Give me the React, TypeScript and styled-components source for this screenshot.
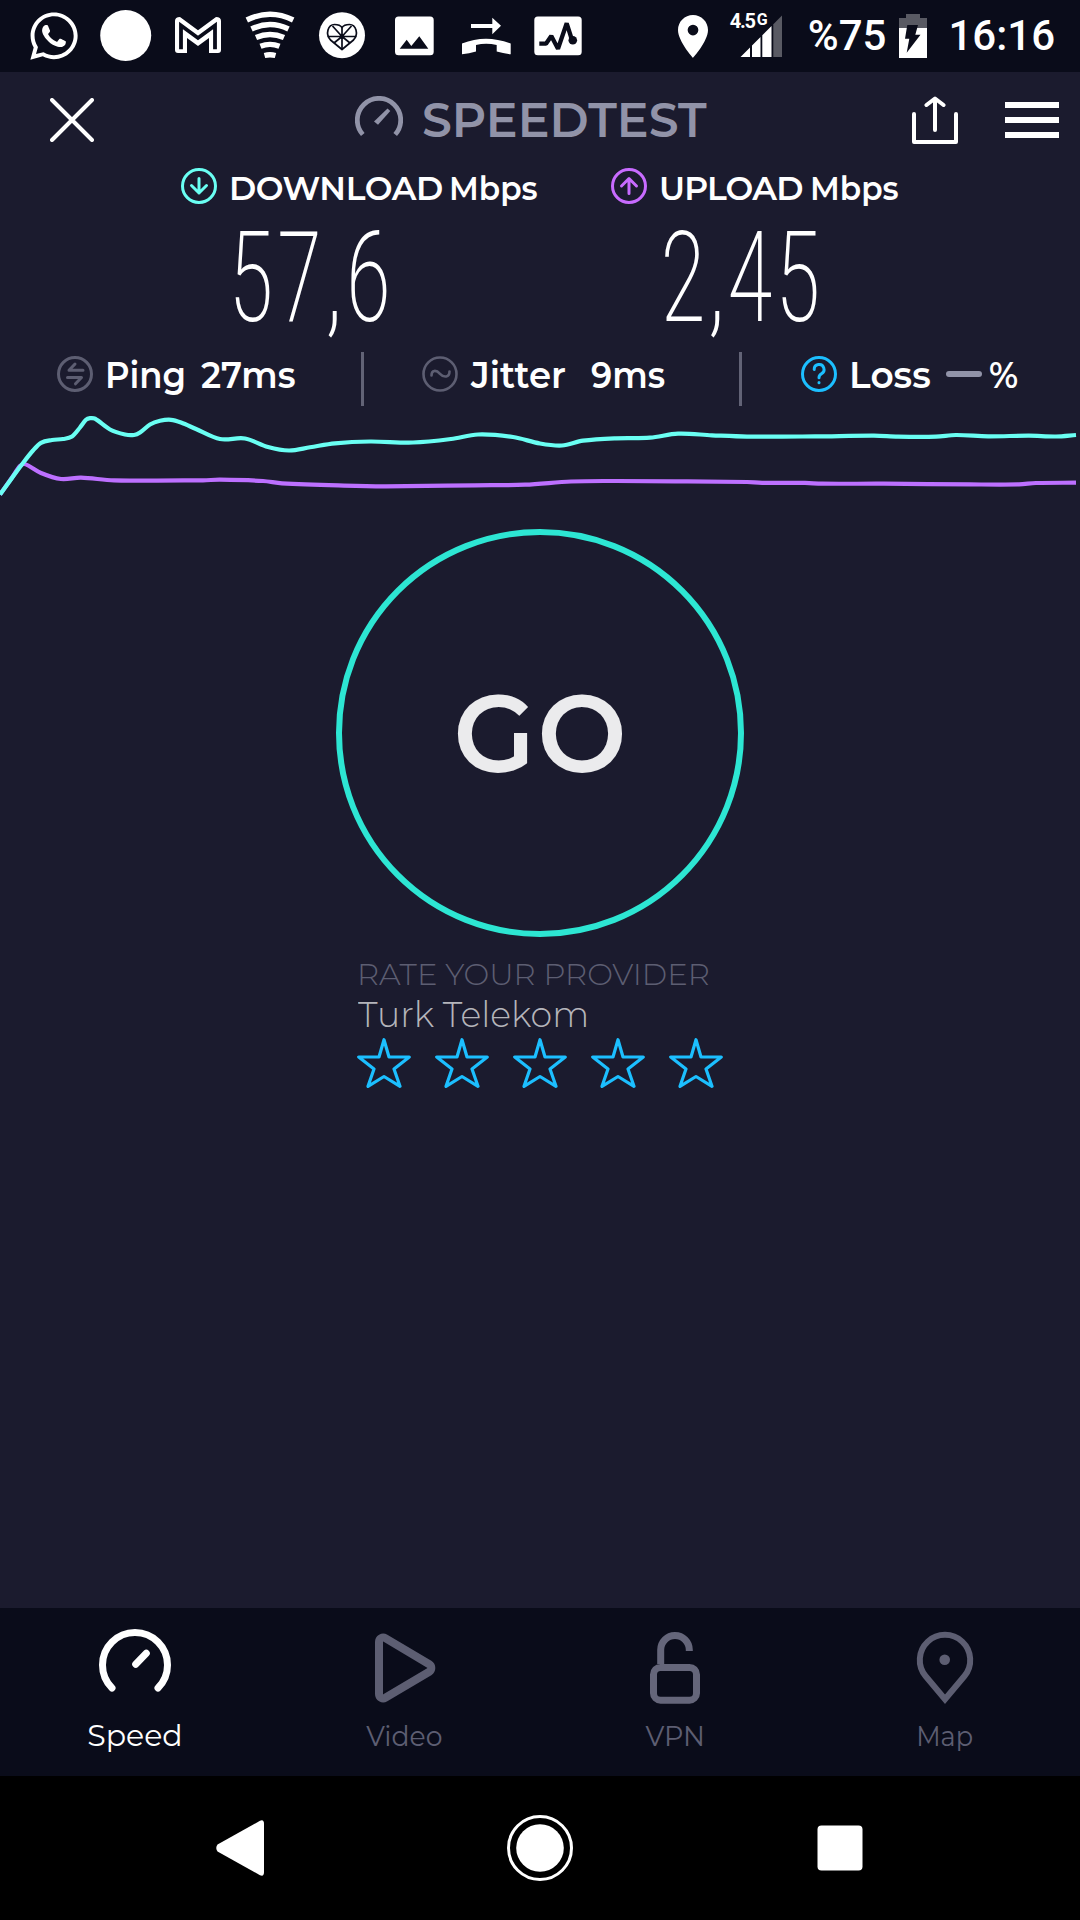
import React from "react";
import styled, { createGlobalStyle } from "styled-components";
import { FaWhatsapp } from "react-icons/fa";

const GlobalStyle = createGlobalStyle`
  * { box-sizing: border-box; }
  body { margin: 0; background: #1b1b2e; }
  svg { display: block; flex: none; }
`;

const brandFont = `Montserrat, Lato, "Open Sans", sans-serif`;
const systemFont = `Roboto, "Noto Sans", sans-serif`;
const muted = "#5d5e72";

const Screen = styled.div`
  width: 1080px;
  height: 1920px;
  display: flex;
  flex-direction: column;
  background: #1b1b2e;
  color: #fff;
  font-family: ${brandFont};
  overflow: hidden;
`;

interface TextProps {
  $size: number;
  $weight?: number;
  $stretch?: number;
  $color?: string;
  $lead?: number;
  $shift?: number;
  $track?: number;
  $origin?: string;
}

const Text = styled.span<TextProps>`
  display: block;
  flex: none;
  white-space: pre;
  font-size: ${(p) => p.$size}px;
  font-weight: ${(p) => p.$weight ?? 600};
  line-height: ${(p) => p.$lead ?? 40}px;
  letter-spacing: ${(p) => p.$track ?? 0}px;
  color: ${(p) => p.$color ?? "#fff"};
  margin-left: ${(p) => p.$shift ?? 0}px;
  transform: scaleX(${(p) => p.$stretch ?? 1});
  transform-origin: ${(p) => p.$origin ?? "left"} center;
`;

/* ---------- status bar ---------- */
const StatusBar = styled.header`
  height: 72px;
  display: flex;
  align-items: center;
  justify-content: space-between;
  padding: 0 25px 0 18px;
  background: #0a0c1a;
  font-family: ${systemFont};
`;
const Notifications = styled.div`
  display: flex;
`;
const Slot = styled.div`
  width: 72px;
  height: 60px;
  display: flex;
  align-items: center;
  justify-content: center;
`;
const Indicators = styled.div`
  display: flex;
  align-items: center;
`;
const Signal = styled.div`
  width: 52px;
  height: 44px;
  margin: 0 26px 0 22px;
  position: relative;
`;
const NetworkType = styled.div`
  position: absolute;
  left: 0;
  top: -3px;
  display: flex;
  gap: 2px;
  font-weight: 700;
  font-size: 20px;
  line-height: 20px;
  letter-spacing: -1.3px;
`;
const NetworkSuffix = styled.span`
  font-size: 16px;
  line-height: 17px;
`;
const Battery = styled.div`
  margin: 0 21px 0 13px;
`;

const HeartIcon = () => (
  <svg width="60" height="60" viewBox="0 0 60 60">
    <circle cx="30" cy="29.2" r="23" fill="#fff" />
    <g fill="none" stroke="#0a0c1a" strokeWidth="1.7" strokeLinejoin="round">
      <path d="M30 43.5L18.5 34C13 28 16 18.5 22.5 18.5C26.5 18.5 29 20 30 21.5C31 20 33.5 18.5 37.5 18.5C44 18.5 47 28 41.5 34Z" />
      <path d="M30 21.5V43.5M15.5 30.5H44.5M20.5 20L30 30.5L39.5 20M22 37L30 30.5L38 37" />
    </g>
    <circle cx="30" cy="30.5" r="2.4" fill="#0a0c1a" />
  </svg>
);

const Status = () => (
  <StatusBar>
    <Notifications>
      <Slot><FaWhatsapp size={54} /></Slot>
      <Slot>
        <svg width="60" height="60" viewBox="0 0 60 60"><circle cx="29.7" cy="29.5" r="25.5" fill="#fff" /></svg>
      </Slot>
      <Slot>
        <svg width="60" height="60" viewBox="0 0 60 60">
          <path d="M7 15Q7 11 12 11L30 24.3L48 11Q53 11 53 15V44Q53 47 50 47H41V32L30 40L19 32V47H10Q7 47 7 44Z" fill="#fff" />
          <path d="M13 43.3V19.5L30 32L47 19.5V43.3" fill="none" stroke="#0a0c1a" strokeWidth="3.8" />
        </svg>
      </Slot>
      <Slot>
        <svg width="60" height="60" viewBox="0 0 60 60" fill="none" stroke="#fff" strokeWidth="5.4">
          <path d="M6.8 14Q30 2.5 53.2 14M11.5 23Q30 14 48.5 23M16 31.5Q30 25.5 44 31.5M20.5 40.3Q30 36.5 39.5 40.3" />
          <path d="M24.5 49.5Q30 48 35.5 49.5" />
        </svg>
      </Slot>
      <Slot><HeartIcon /></Slot>
      <Slot>
        <svg width="60" height="60" viewBox="0 0 60 60">
          <rect x="11" y="10.5" width="38.7" height="38.7" rx="3.5" fill="#fff" />
          <path d="M15.7 42.7L22.7 33.7L27.3 40L35.3 30.3L44.3 42.7Z" fill="#0a0c1a" />
        </svg>
      </Slot>
      <Slot>
        <svg width="60" height="60" viewBox="0 0 60 60" fill="#fff">
          <path d="M15 18H36.3V11.7L45 19.7L36.3 28.3V22H15Z" />
          <path d="M6 48.3V37.5Q18 33 30 32.8Q42 33 54.7 37.5V48.3Q47 47.3 40.7 45.5V39Q30 36.5 20 39V45.5Q13 47.5 6 48.3Z" />
        </svg>
      </Slot>
      <Slot>
        <svg width="60" height="60" viewBox="0 0 60 60">
          <rect x="6.3" y="10.5" width="47.4" height="38.7" rx="3.5" fill="#fff" />
          <path d="M11.3 37.7H18L23.3 30L30 42.7L38.7 17.3L44 34" fill="none" stroke="#0a0c1a" strokeWidth="4.3" strokeLinejoin="bevel" />
          <circle cx="44.8" cy="34.2" r="4.3" fill="#0a0c1a" />
        </svg>
      </Slot>
    </Notifications>
    <Indicators>
      <svg width="30" height="43" viewBox="5 2 14 20" fill="#fff">
        <path d="M12 2C8.13 2 5 5.13 5 9c0 5.25 7 13 7 13s7-7.75 7-13c0-3.87-3.13-7-7-7zm0 9.5a2.5 2.5 0 1 1 0-5 2.5 2.5 0 0 1 0 5z" />
      </svg>
      <Signal>
        <svg width="52" height="44" viewBox="0 0 52 44">
          <path d="M10.5 43L20 33.5V43ZM22 31.5L30.5 23V43H22ZM32.3 21.2L41.5 12V43H32.3Z" fill="#fff" />
          <path d="M43.3 10.2L52 1.5V43H43.3Z" fill="#595a63" />
        </svg>
        <NetworkType>4.5<NetworkSuffix>G</NetworkSuffix></NetworkType>
      </Signal>
      <Text $size={42} $weight={500} $lead={52}>%75</Text>
      <Battery>
        <svg width="28" height="44" viewBox="0 0 28 44">
          <path d="M7 0H21V4H28V14H0V4H7Z" fill="#595a63" />
          <path d="M0 14H28V44H0Z" fill="#fff" />
          <path d="M8.3 11H19L16.3 20.7H21.5L7.7 38.7L10.3 24.7H6Z" fill="#0a0c1a" />
        </svg>
      </Battery>
      <Text $size={42} $weight={500} $lead={52}>16:16</Text>
    </Indicators>
  </StatusBar>
);

/* ---------- app header ---------- */
const AppBar = styled.div`
  height: 96px;
  display: flex;
  align-items: center;
  padding: 0 21px 0 50px;
`;
const Brand = styled.div`
  display: flex;
  align-items: center;
  margin-left: 261px;
`;
const Actions = styled.div`
  display: flex;
  align-items: center;
  gap: 47px;
  margin-left: auto;
`;
const Burger = styled.div`
  width: 54px;
  height: 36px;
  display: flex;
  flex-direction: column;
  justify-content: space-between;
`;
const BurgerLine = styled.i`
  height: 6px;
  background: #fff;
`;

/* ---------- results ---------- */
const Results = styled.section`
  display: grid;
  grid-template-columns: 430px 430px;
  padding-left: 181px;
  height: 184px;
  align-content: start;
`;
const ResultHead = styled.div`
  display: flex;
  height: 40px;
  align-items: flex-start;
`;
const Unit = styled.div<{ $name: number }>`
  display: grid;
  grid-template-columns: ${(p) => p.$name}px auto;
  margin-left: 12px;
`;
const ResultValue = styled.div<{ $indent: number }>`
  padding-left: ${(p) => p.$indent}px;
  height: 136px;
  font-family: "Roboto Condensed", Roboto, sans-serif;
`;
const Stats = styled.section`
  display: flex;
  height: 54px;
`;
const Stat = styled.div<{ $width: number; $pad: number }>`
  width: ${(p) => p.$width}px;
  padding: 4px 0 0 ${(p) => p.$pad}px;
  display: flex;
  align-items: flex-start;
`;
const StatLabel = styled.div<{ $width: number }>`
  width: ${(p) => p.$width}px;
  margin-left: 14px;
`;
const Divider = styled.div`
  width: 3px;
  background: #626376;
`;
const Dash = styled.i`
  width: 36px;
  height: 6px;
  margin-top: 15px;
  border-radius: 3px;
  background: #9193a8;
`;

type Point = [number, number];
const smooth = (pts: Point[]) =>
  pts.slice(1).reduce((d, p, i) => {
    const a = pts[i - 1];
    const b = pts[i];
    const c = pts[i + 2] ?? p;
    const k = (p[0] - b[0]) / 3;
    const s1 = a ? (p[1] - a[1]) / (p[0] - a[0]) : (p[1] - b[1]) / (p[0] - b[0]);
    const s2 = (c[1] - b[1]) / (c[0] - b[0]);
    return `${d}C${b[0] + k} ${b[1] + k * s1} ${p[0] - k} ${p[1] - k * s2} ${p[0]} ${p[1]}`;
  }, `M${pts[0][0]} ${pts[0][1]}`);

const download: Point[] = [[0, 84.5], [12, 68], [23, 53], [33, 40.5], [41, 32.8], [52, 30], [63, 29], [72, 26.5], [80, 17.5], [86, 9.8], [90, 8.2], [95, 8.7], [110, 19.5], [125, 24.5], [134, 25], [140, 22.5], [150, 14.5], [160, 10.8], [171, 9.8], [181, 12.5], [196, 19], [220, 29], [245, 28.5], [268, 37], [289, 40.5], [310, 37.3], [335, 33.3], [370, 31.5], [413, 32.5], [451, 29], [478, 24.5], [513, 27], [540, 33.5], [562, 35.5], [583, 30.7], [616, 28.3], [650, 27.7], [678, 23.7], [712, 25.3], [747, 26.6], [815, 26.4], [874, 25.7], [898, 26.7], [936, 26.7], [956, 25], [988, 26.3], [1029, 25.7], [1056, 26.5], [1076, 25]];
const upload: Point[] = [[0, 84.5], [12, 67.5], [20, 56], [24, 54], [29, 56], [41, 63], [61, 69], [81, 67.7], [114, 70.3], [203, 70.3], [220, 69.7], [263, 71], [282, 73.3], [344, 75.6], [386, 76.3], [475, 75.3], [525, 74.7], [571, 71.5], [609, 71], [678, 71.3], [747, 72], [762, 72.8], [805, 72.9], [822, 73.7], [884, 73.7], [970, 74.4], [1019, 74.4], [1036, 73], [1076, 72.7]];

/* ---------- body ---------- */
const Body = styled.main`
  flex: 1;
  display: flex;
  flex-direction: column;
  align-items: center;
  padding-top: 33px;
`;
const GoButton = styled.button`
  width: 408px;
  height: 408px;
  padding: 0;
  border: 6px solid #2de6d3;
  border-radius: 50%;
  background: none;
  font-family: inherit;
  display: flex;
  align-items: center;
  justify-content: center;
`;
const Provider = styled.div`
  width: 366px;
  margin-top: 18px;
`;
const Stars = styled.div`
  display: flex;
  justify-content: space-between;
  margin-top: 4px;
`;

/* ---------- bottom ---------- */
const Tabs = styled.nav`
  height: 168px;
  display: grid;
  grid-template-columns: repeat(4, 1fr);
  background: #0a0c1a;
`;
const Tab = styled.div`
  display: flex;
  flex-direction: column;
  align-items: center;
  padding-top: 17px;
  gap: 11px;
`;
const SystemNav = styled.nav`
  height: 144px;
  display: grid;
  grid-template-columns: repeat(3, 300px);
  justify-content: center;
  place-items: center;
  background: #000;
`;

export default function App() {
  return (
    <Screen>
      <GlobalStyle />
      <Status />
      <AppBar>
        <svg width="44" height="44" viewBox="0 0 44 44" stroke="#fff" strokeWidth="4" strokeLinecap="round">
          <path d="M2 2L42 42M42 2L2 42" />
        </svg>
        <Brand>
          <svg width="48" height="48" viewBox="0 0 48 48" fill="none">
            <path d="M7.8 38.5A21.7 21.7 0 1 1 40.2 38.5" stroke="#9193a8" strokeWidth="4.8" />
            <path d="M19 25.5L23 28.8L35.3 15L32.5 12.5Z" fill="#9193a8" />
          </svg>
          <Text $size={48.5} $color="#9193a8" $shift={18.5} $stretch={0.979}>SPEEDTEST</Text>
        </Brand>
        <Actions>
          <svg width="46" height="48" viewBox="0 0 46 48" fill="none" stroke="#fff" strokeWidth="4" strokeLinecap="round" strokeLinejoin="round">
            <path d="M2 18V46H44V18M23 3V34M14.5 9L23 2.5L31.5 9" />
          </svg>
          <Burger><BurgerLine /><BurgerLine /><BurgerLine /></Burger>
        </Actions>
      </AppBar>

      <Results>
        <div>
          <ResultHead>
            <svg width="36" height="36" viewBox="0 0 36 36" fill="none" stroke="#6afff3" strokeWidth="3" strokeLinecap="round" strokeLinejoin="round">
              <circle cx="18" cy="18" r="16.5" /><path d="M18 10.5V25M10.5 17.5L18 25L25.5 17.5" />
            </svg>
            <Unit $name={220}>
              <Text $size={33} $track={-0.4}>DOWNLOAD</Text>
              <Text $size={33} $stretch={0.945}>Mbps</Text>
            </Unit>
          </ResultHead>
          <ResultValue $indent={46.5}>
            <Text $size={126} $weight={200} $lead={141} $stretch={0.75} $track={3.6}>57,6</Text>
          </ResultValue>
        </div>
        <div>
          <ResultHead>
            <svg width="36" height="36" viewBox="0 0 36 36" fill="none" stroke="#c86bff" strokeWidth="3" strokeLinecap="round" strokeLinejoin="round">
              <circle cx="18" cy="18" r="16.5" /><path d="M18 25.5V11M10.5 18L18 10.5L25.5 18" />
            </svg>
            <Unit $name={151}>
              <Text $size={33} $track={-0.8}>UPLOAD</Text>
              <Text $size={33} $stretch={0.945}>Mbps</Text>
            </Unit>
          </ResultHead>
          <ResultValue $indent={48.5}>
            <Text $size={126} $weight={200} $lead={141} $stretch={0.755} $track={2}>2,45</Text>
          </ResultValue>
        </div>
      </Results>

      <Stats>
        <Stat $width={361} $pad={57}>
          <svg width="36" height="36" viewBox="0 0 36 36" fill="none" stroke={muted} strokeWidth="3" strokeLinecap="round" strokeLinejoin="round">
            <circle cx="18" cy="18" r="16.5" /><path d="M26 14.3H12L18 8M10.5 21.5H24.5L18.5 27.8" />
          </svg>
          <StatLabel $width={94}><Text $size={36} $lead={38} $shift={-2.2} $stretch={0.94}>Ping</Text></StatLabel>
          <Text $size={36} $lead={38} $stretch={0.96}>27ms</Text>
        </Stat>
        <Divider />
        <Stat $width={375} $pad={58}>
          <svg width="36" height="36" viewBox="0 0 36 36" fill="none" stroke={muted} strokeWidth="2.6" strokeLinecap="round">
            <circle cx="18" cy="18" r="16.5" /><path d="M9.5 19.5C9.5 14 14 13.5 18 17.8C22 22 27.5 21.5 27.5 15.5" />
          </svg>
          <StatLabel $width={121}><Text $size={36} $lead={38} $shift={-0.6} $stretch={0.985}>Jitter</Text></StatLabel>
          <Text $size={36} $lead={38} $shift={-2} $stretch={0.937}>9ms</Text>
        </Stat>
        <Divider />
        <Stat $width={338} $pad={59}>
          <svg width="36" height="36" viewBox="0 0 36 36" fill="none" stroke="#1cbfff" strokeWidth="3" strokeLinecap="round">
            <circle cx="18" cy="18" r="16.5" /><path d="M13.2 13.5A4.9 4.9 0 1 1 20.3 17.8Q18 19 18 21.8M18 26.6V26.7" />
          </svg>
          <StatLabel $width={95}><Text $size={36} $lead={38} $shift={-2}>Loss</Text></StatLabel>
          <Dash />
          <Text $size={36} $lead={38} $shift={6.5} $stretch={0.941}>%</Text>
        </Stat>
      </Stats>

      <svg width="1080" height="90" viewBox="0 -4 1080 90" fill="none" strokeWidth="4.2">
        <path d={smooth(upload)} stroke="#bd70ff" />
        <path d={smooth(download)} stroke="#6afff3" />
      </svg>

      <Body>
        <GoButton>
          <Text $size={109} $weight={600} $color="#ebebed" $lead={120} $origin="center" $shift={2} $track={2} $stretch={0.975}>GO</Text>
        </GoButton>
        <Provider>
          <Text $size={30} $weight={300} $color={muted} $stretch={1.022}>RATE YOUR PROVIDER</Text>
          <Text $size={36} $weight={300} $color="#b5b5bb" $lead={39} $shift={1} $stretch={0.965}>Turk Telekom</Text>
          <Stars>
            {[0, 1, 2, 3, 4].map((n) => (
              <svg key={n} width="54" height="50" viewBox="0 0 54 50" fill="none" stroke="#1cbfff" strokeWidth="3.2" strokeLinejoin="round">
                <path d="M27 1.7L32 19H52.3L37 31L43 48.3L27 38.5L11 48.3L17 31L1.7 19H22Z" />
              </svg>
            ))}
          </Stars>
        </Provider>
      </Body>

      <Tabs>
        <Tab>
          <svg width="80" height="80" viewBox="0 0 80 80" fill="none" stroke="#fff" strokeWidth="7" strokeLinecap="round">
            <path d="M17 63A32.5 32.5 0 1 1 63 63M40.7 39.3L51.3 28.3" />
          </svg>
          <Text $size={30} $weight={400} $origin="center">Speed</Text>
        </Tab>
        <Tab>
          <svg width="80" height="80" viewBox="0 0 80 80" fill="none" stroke={muted} strokeWidth="8">
            <path d="M14 17C14 13.5 17.5 11.5 20.3 13.2L64.2 39.2C67 41 67 45 64.2 46.8L20.3 72.8C17.5 74.5 14 72.5 14 69Z" />
          </svg>
          <Text $size={27.5} $weight={400} $color={muted} $lead={41} $shift={-1} $origin="center" $stretch={0.97}>Video</Text>
        </Tab>
        <Tab>
          <svg width="80" height="80" viewBox="0 0 80 80" fill="none" stroke="#65667a" strokeWidth="7">
            <rect x="18.5" y="42.5" width="43" height="32.7" rx="7" /><path d="M25.7 39V24.8A14.3 14.3 0 0 1 54.3 24.8V26" />
          </svg>
          <Text $size={27.5} $weight={400} $color={muted} $lead={41} $origin="center" $stretch={0.98}>VPN</Text>
        </Tab>
        <Tab>
          <svg width="80" height="80" viewBox="0 0 80 80" fill="none" stroke={muted} strokeWidth="6">
            <path d="M40 74.3L20.5 51A25.2 25.2 0 1 1 59.5 51Z" /><circle cx="39.7" cy="34.7" r="5.3" fill={muted} stroke="none" />
          </svg>
          <Text $size={27.5} $weight={400} $color={muted} $lead={41} $shift={-1} $origin="center" $stretch={0.93}>Map</Text>
        </Tab>
      </Tabs>

      <SystemNav>
        <svg width="48" height="56" viewBox="0 0 48 56" fill="#fff"><path d="M1.5 24.5L44 .8Q48 -1 48 4V52Q48 57 44 55.2L1.5 31.5Q-1 28 1.5 24.5Z" /></svg>
        <svg width="66" height="66" viewBox="0 0 66 66"><circle cx="33" cy="33" r="31.5" fill="none" stroke="#fff" strokeWidth="3" /><circle cx="33" cy="33" r="23.8" fill="#fff" /></svg>
        <svg width="46" height="46" viewBox="0 0 46 46"><rect x=".5" y=".5" width="45" height="45" rx="4" fill="#fff" /></svg>
      </SystemNav>
    </Screen>
  );
}
